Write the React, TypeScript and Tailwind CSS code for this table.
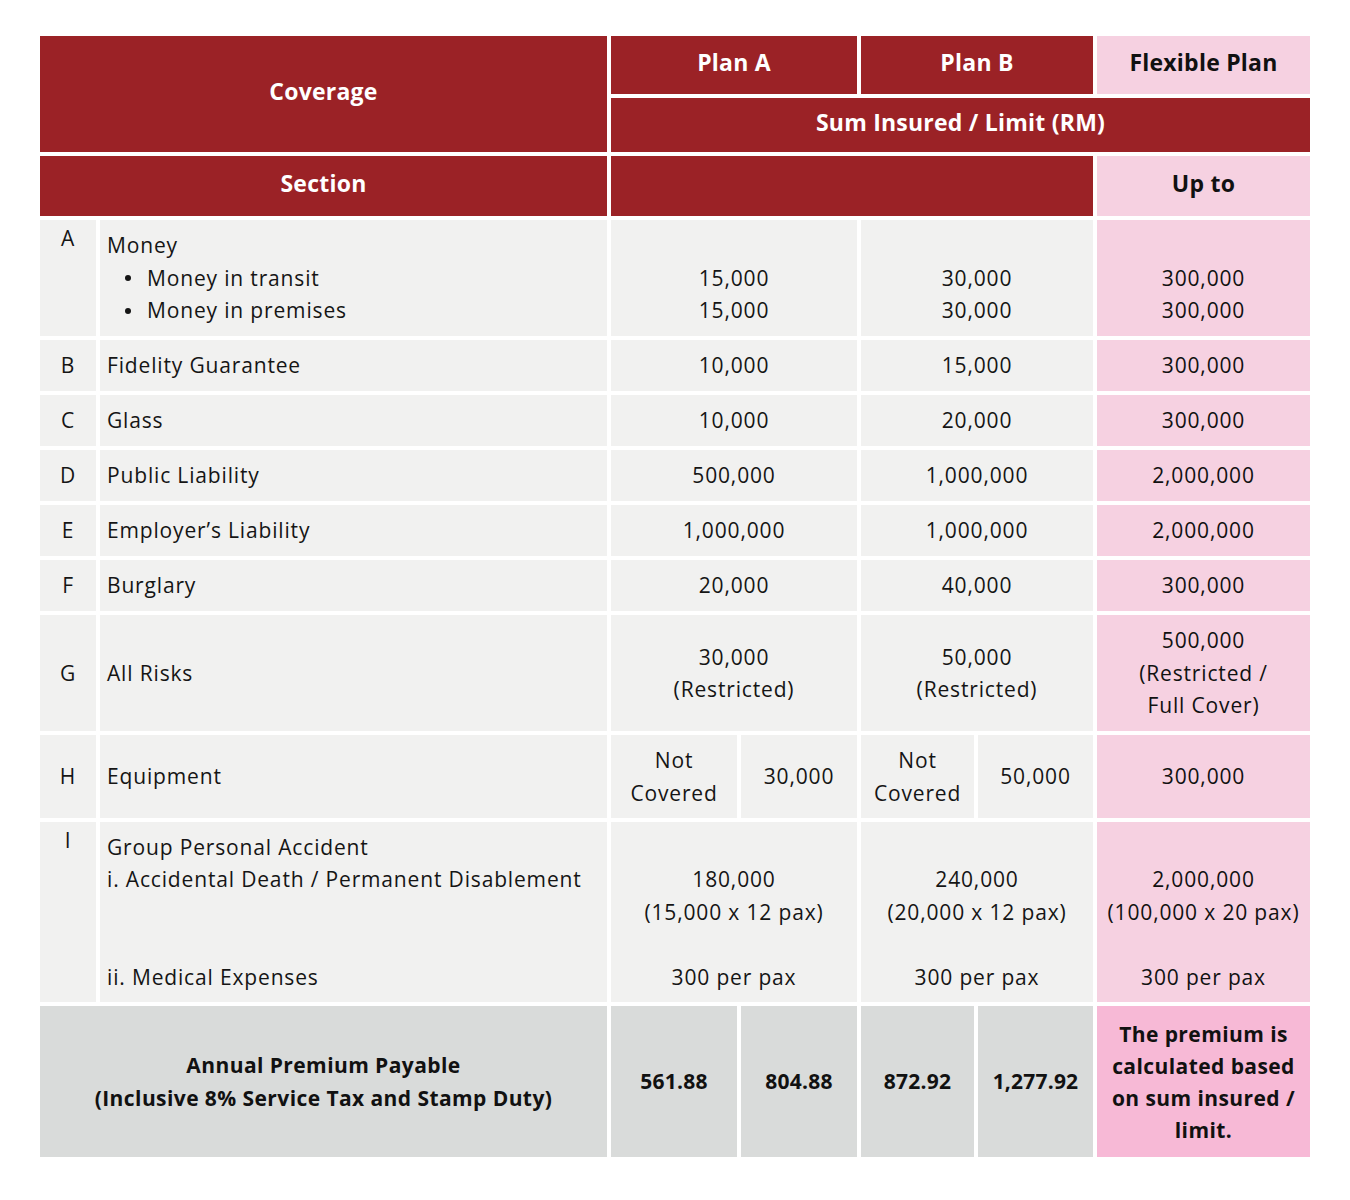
import React from "react";

const RED = "bg-[#9b2226] text-white";
const PINK = "bg-[#f6d1e1] text-[#111]";
const GRAY = "bg-[#f1f1f0] text-[#151515]";
const DARK = "bg-[#d9dbda] text-[#111]";
const PINK2 = "bg-[#f7b9d6] text-[#111]";
const HEAD = "font-bold text-[23px] pb-[5px]";

function C({ className = "", children }: { className?: string; children?: React.ReactNode }) {
  return (
    <div className={`flex flex-col items-center justify-center text-center ${className}`}>{children}</div>
  );
}

type Row = {
  l: string;
  d: React.ReactNode;
  a: React.ReactNode;
  b: React.ReactNode;
  f: React.ReactNode;
  top?: boolean;
};

const Bullet = ({ children }: { children: React.ReactNode }) => (
  <div className="flex items-center">
    <span className="w-[40px] pl-[18px] flex items-center">
      <span className="block w-[6px] h-[6px] rounded-full bg-[#151515]" />
    </span>
    <span>{children}</span>
  </div>
);

const L = ({ children }: { children?: React.ReactNode }) => <div className="h-[32.5px]">{children}</div>;

export default function App() {
  const rows: Row[] = [
    {
      l: "A",
      top: true,
      d: (
        <>
          <L>Money</L>
          <L>
            <Bullet>Money in transit</Bullet>
          </L>
          <L>
            <Bullet>Money in premises</Bullet>
          </L>
        </>
      ),
      a: (
        <>
          <L />
          <L>15,000</L>
          <L>15,000</L>
        </>
      ),
      b: (
        <>
          <L />
          <L>30,000</L>
          <L>30,000</L>
        </>
      ),
      f: (
        <>
          <L />
          <L>300,000</L>
          <L>300,000</L>
        </>
      ),
    },
    { l: "B", d: "Fidelity Guarantee", a: "10,000", b: "15,000", f: "300,000" },
    { l: "C", d: "Glass", a: "10,000", b: "20,000", f: "300,000" },
    { l: "D", d: "Public Liability", a: "500,000", b: "1,000,000", f: "2,000,000" },
    { l: "E", d: "Employer\u2019s Liability", a: "1,000,000", b: "1,000,000", f: "2,000,000" },
    { l: "F", d: "Burglary", a: "20,000", b: "40,000", f: "300,000" },
    {
      l: "G",
      d: "All Risks",
      a: (
        <>
          <L>30,000</L>
          <L>(Restricted)</L>
        </>
      ),
      b: (
        <>
          <L>50,000</L>
          <L>(Restricted)</L>
        </>
      ),
      f: (
        <>
          <L>500,000</L>
          <L>(Restricted /</L>
          <L>Full Cover)</L>
        </>
      ),
    },
  ];

  const renderRow = (r: Row) => (
    <React.Fragment key={r.l}>
      <div className={`${GRAY} flex justify-center ${r.top ? "items-start pt-[2px]" : "items-center"}`}>
        <div className="leading-[32.5px]">{r.l}</div>
      </div>
      <div className={`${GRAY} flex flex-col justify-center pl-[7px]`}>{r.d}</div>
      <C className={`${GRAY} col-span-2`}>{r.a}</C>
      <C className={`${GRAY} col-span-2`}>{r.b}</C>
      <C className={`${PINK}`}>{r.f}</C>
    </React.Fragment>
  );

  return (
    <div
      className="bg-white min-h-[1200px] pt-[36px] pl-[40px]"
      style={{ fontFamily: '"Open Sans", "Noto Sans", sans-serif' }}
    >
      <div className="grid w-[1270px] gap-[4px] text-[21px] tracking-[0.04em] leading-[32.5px] grid-cols-[56px_507px_126px_116px_113px_115px_213px] grid-rows-[58px_54px_60px_116px_51px_51px_51px_51px_51px_116px_83px_180px_151px]">
        {/* header */}
        <C className={`${RED} col-span-2 row-span-2 ${HEAD} tracking-[0.01em]`}>Coverage</C>
        <C className={`${RED} col-span-2 ${HEAD} tracking-[0.01em]`}>Plan A</C>
        <C className={`${RED} col-span-2 ${HEAD} tracking-[0.01em]`}>Plan B</C>
        <C className={`${PINK} ${HEAD} tracking-[0.01em]`}>Flexible Plan</C>
        <C className={`${RED} col-start-3 col-span-5 ${HEAD} tracking-[0.01em]`}>Sum Insured / Limit (RM)</C>
        <C className={`${RED} col-span-2 ${HEAD} tracking-[0.01em]`}>Section</C>
        <C className={`${RED} col-span-4`} />
        <C className={`${PINK} ${HEAD} tracking-[0.01em]`}>Up to</C>

        {rows.map(renderRow)}

        {/* H */}
        <div className={`${GRAY} flex items-center justify-center`}>H</div>
        <div className={`${GRAY} flex items-center pl-[7px]`}>Equipment</div>
        <C className={GRAY}>
          <L>Not</L>
          <L>Covered</L>
        </C>
        <C className={GRAY}>30,000</C>
        <C className={GRAY}>
          <L>Not</L>
          <L>Covered</L>
        </C>
        <C className={GRAY}>50,000</C>
        <C className={PINK}>300,000</C>

        {/* I */}
        <div className={`${GRAY} flex justify-center items-start pt-[2px]`}>
          <div className="leading-[32.5px]">I</div>
        </div>
        <div className={`${GRAY} flex flex-col justify-center pl-[7px]`}>
          <L>Group Personal Accident</L>
          <L>i. Accidental Death / Permanent Disablement</L>
          <L />
          <L />
          <L>ii. Medical Expenses</L>
        </div>
        <C className={`${GRAY} col-span-2`}>
          <L />
          <L>180,000</L>
          <L>(15,000 x 12 pax)</L>
          <L />
          <L>300 per pax</L>
        </C>
        <C className={`${GRAY} col-span-2`}>
          <L />
          <L>240,000</L>
          <L>(20,000 x 12 pax)</L>
          <L />
          <L>300 per pax</L>
        </C>
        <C className={PINK}>
          <L />
          <L>2,000,000</L>
          <L>(100,000 x 20 pax)</L>
          <L />
          <L>300 per pax</L>
        </C>

        {/* Premium */}
        <C className={`${DARK} col-span-2 font-bold tracking-[0.02em]`}>
          <L>Annual Premium Payable</L>
          <L>(Inclusive 8% Service Tax and Stamp Duty)</L>
        </C>
        <C className={`${DARK} font-bold tracking-[0.01em]`}>561.88</C>
        <C className={`${DARK} font-bold tracking-[0.01em]`}>804.88</C>
        <C className={`${DARK} font-bold tracking-[0.01em]`}>872.92</C>
        <C className={`${DARK} font-bold tracking-[0.01em]`}>1,277.92</C>
        <C className={`${PINK2} font-bold leading-[32px] tracking-[0.02em]`}>
          <div>The premium is</div>
          <div>calculated based</div>
          <div>on sum insured /</div>
          <div>limit.</div>
        </C>
      </div>
    </div>
  );
}
